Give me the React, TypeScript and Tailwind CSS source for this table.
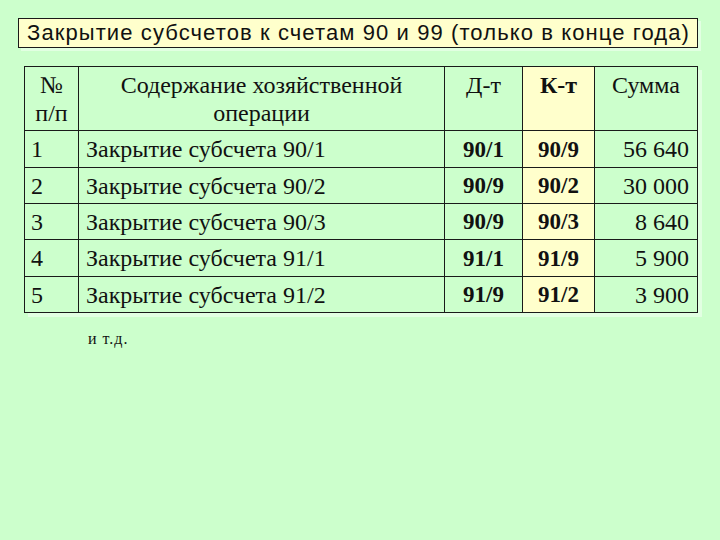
import React from 'react';

const rows = [
  { n: '1', text: 'Закрытие субсчета 90/1', d: '90/1', k: '90/9', sum: '56 640', h: 'h-[37px]' },
  { n: '2', text: 'Закрытие субсчета 90/2', d: '90/9', k: '90/2', sum: '30 000', h: 'h-[36px]' },
  { n: '3', text: 'Закрытие субсчета 90/3', d: '90/9', k: '90/3', sum: '8 640', h: 'h-[36px]' },
  { n: '4', text: 'Закрытие субсчета 91/1', d: '91/1', k: '91/9', sum: '5 900', h: 'h-[37px]' },
  { n: '5', text: 'Закрытие субсчета 91/2', d: '91/9', k: '91/2', sum: '3 900', h: 'h-[36px]' },
];

const serif = "font-['Liberation_Serif','Times_New_Roman',serif]";

export default function App() {
  return (
    <div className="w-[720px] h-[540px] bg-[#ccffcc] overflow-hidden pt-[18px]">
      {/* Title */}
      <div className="ml-[18px] w-[680px] h-[30px] bg-[#ffffcc] border border-[#1a1a1a] flex items-center pl-[8px] shadow-[3px_3px_0_#e2ffe2]">
        <span className="font-['Liberation_Sans',Arial,sans-serif] text-[22px] text-[#111] leading-none tracking-[1.1px] whitespace-nowrap">
          Закрытие субсчетов к счетам 90 и 99 (только в конце года)
        </span>
      </div>

      {/* Table */}
      <table className={`ml-[24px] mt-[18px] border-collapse ${serif} text-[24px] text-[#111] shadow-[4px_4px_0_#e2ffe2]`}>
        <colgroup>
          <col className="w-[54px]" />
          <col className="w-[366px]" />
          <col className="w-[78px]" />
          <col className="w-[72px]" />
          <col className="w-[103px]" />
        </colgroup>
        <thead>
          <tr className="h-[64px]">
            <th className="border border-[#1a1a1a] align-top font-normal text-center leading-[28px] pt-[4px] px-0">
              №<br />п/п
            </th>
            <th className="border border-[#1a1a1a] align-top font-normal text-center leading-[28px] pt-[4px]">
              Содержание хозяйственной<br />операции
            </th>
            <th className="border border-[#1a1a1a] align-top font-normal text-center leading-[28px] pt-[4px]">
              Д-т
            </th>
            <th className="border border-[#1a1a1a] align-top font-bold text-center leading-[28px] pt-[4px] bg-[#ffffcc]">
              К-т
            </th>
            <th className="border border-[#1a1a1a] align-top font-normal text-center leading-[28px] pt-[4px]">
              Сумма
            </th>
          </tr>
        </thead>
        <tbody>
          {rows.map((r) => (
            <tr key={r.n} className={r.h}>
              <td className="border border-[#1a1a1a] pl-[6px] align-middle leading-none">{r.n}</td>
              <td className="border border-[#1a1a1a] pl-[7px] align-middle leading-none whitespace-nowrap">{r.text}</td>
              <td className="border border-[#1a1a1a] text-center font-bold text-[23px] align-middle leading-none">{r.d}</td>
              <td className="border border-[#1a1a1a] text-center font-bold text-[23px] align-middle leading-none bg-[#ffffcc]">{r.k}</td>
              <td className="border border-[#1a1a1a] text-right pr-[8px] align-middle leading-none">{r.sum}</td>
            </tr>
          ))}
        </tbody>
      </table>

      <div className={`${serif} text-[16px] text-[#111] ml-[88px] mt-[18px] leading-none tracking-[1px]`}>и т.д.</div>
    </div>
  );
}
